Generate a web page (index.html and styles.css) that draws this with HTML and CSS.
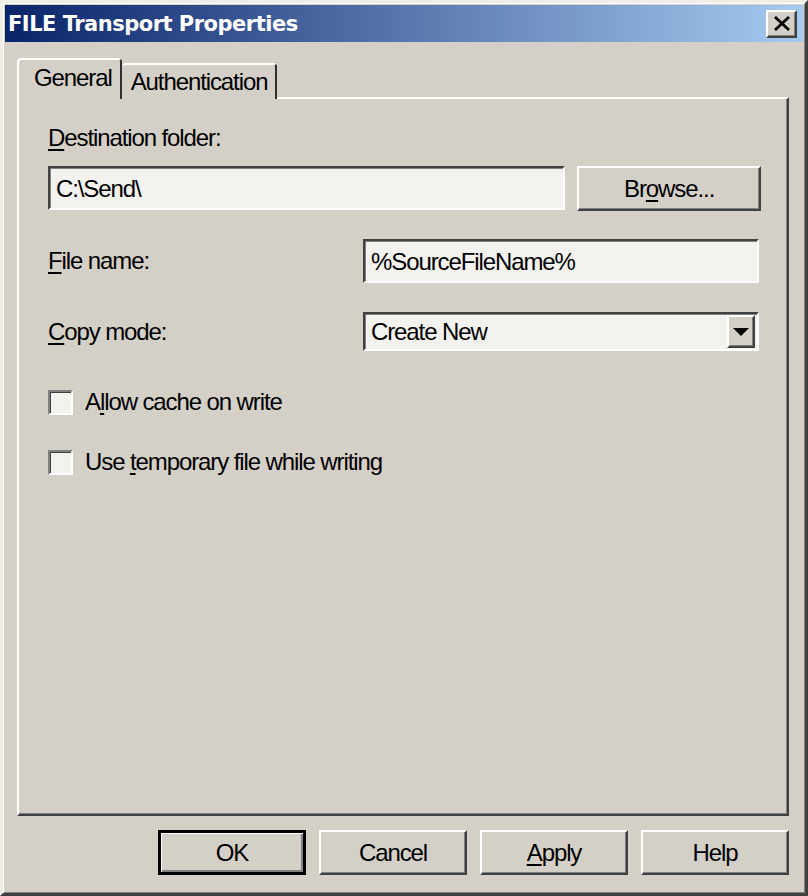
FILE: index.html
```html
<!DOCTYPE html>
<html lang="en">
<head>
  <meta charset="UTF-8" />
  <title>FILE Transport Properties</title>
  <link rel="stylesheet" href="styles.css">
</head>
<body>

<div class="dialog">
  <div class="titlebar">
    <span class="title">FILE Transport Properties</span>
    <button class="close" aria-label="Close">
      <svg width="18" height="15" viewBox="0 0 18 15">
        <path d="M2 1 L16 14 M16 1 L2 14" stroke="#000" stroke-width="2.8" />
      </svg>
    </button>
  </div>

  <div class="content">
    <!-- Tabs -->
    <div class="tabs">
      <div class="tab active">General</div>
      <div class="tab">Authentication</div>
    </div>

    <!-- General page -->
    <div class="panel">
      <div class="label"><u>D</u>estination folder:</div>
      <div class="dest-row">
        <div class="field">C:\Send\</div>
        <button class="btn browse">Br<u>o</u>wse...</button>
      </div>

      <div class="form-row">
        <div class="label"><u>F</u>ile name:</div>
        <div class="field">%SourceFileName%</div>
      </div>

      <div class="form-row">
        <div class="label"><u>C</u>opy mode:</div>
        <div class="field combo">
          <span>Create New</span>
          <span class="drop"><span class="arrow"></span></span>
        </div>
      </div>

      <label class="check"><span class="box"></span><span>A<u>l</u>low cache on write</span></label>
      <label class="check"><span class="box"></span><span>Use <u>t</u>emporary file while writing</span></label>
    </div>

    <div class="actions">
      <button class="btn default">OK</button>
      <button class="btn">Cancel</button>
      <button class="btn"><u>A</u>pply</button>
      <button class="btn">Help</button>
    </div>
  </div>
</div>

</body>
</html>
```

FILE: styles.css
```css
body {
  margin: 0;
  background: #d4d0c8;
  font-family: 'Liberation Sans', Arial, sans-serif;
  font-size: 24px;
  letter-spacing: -1.1px;
  color: #000;
}

u {
  text-decoration-thickness: 2px;
  text-underline-offset: 3px;
}

.dialog {
  width: 808px;
  height: 896px;
  box-sizing: border-box;
  padding: 2px;
  background: #d4d0c8;
  border: 3px solid;
  border-color: #efede8 #404040 #404040 #efede8;
  box-shadow: inset 1px 1px #fff, inset -1px -1px #808080;
}

/* title bar */
.titlebar {
  height: 37px;
  display: flex;
  align-items: center;
  justify-content: space-between;
  padding: 0 6px 0 3px;
  background: linear-gradient(to right, #0a246a, #a6caf0);
}

.title {
  color: #fff;
  font-family: 'DejaVu Sans', sans-serif;
  font-weight: bold;
  font-size: 21px;
  letter-spacing: -0.5px;
}

.close {
  width: 31px;
  height: 28px;
  padding: 0;
  display: flex;
  align-items: center;
  justify-content: center;
  background: #d4d0c8;
  border: 2px solid;
  border-color: #fff #404040 #404040 #fff;
  box-shadow: inset -1px -1px #808080;
}

.content {
  padding: 16px 14px 0 12px;
}

/* tabs */
.tabs {
  display: flex;
  align-items: flex-end;
  height: 41px;
  position: relative;
  z-index: 1;
  margin-bottom: -2px;
}

.tab {
  box-sizing: border-box;
  height: 36px;
  padding: 0 8px 0 9px;
  border: 2px solid;
  border-bottom: none;
  border-color: #fff #303030 transparent #fff;
  border-radius: 4px 4px 0 0;
  line-height: 34px;
  background: #d4d0c8;
}

.tab.active {
  height: 41px;
  padding: 0 8px 0 15px;
  line-height: 36px;
}

.tab + .tab {
  border-left: none;
}

/* page */
.panel {
  box-sizing: border-box;
  height: 719px;
  padding: 24px 26px 0 29px;
  border: 2px solid;
  border-color: #fff #404040 #404040 #fff;
  box-shadow: inset -1px -1px #808080;
}

.label {
  line-height: 30px;
}

.dest-row {
  display: flex;
  gap: 12px;
  margin-top: 13px;
}

.dest-row .field {
  width: 518px;
}

.field {
  box-sizing: border-box;
  height: 44px;
  padding: 5px 6px 0;
  background: #f3f2ef;
  border: 2px solid;
  border-color: #404040 #fff #fff #404040;
  box-shadow: inset 1px 1px #808080;
  line-height: 32px;
}

.form-row {
  display: grid;
  grid-template-columns: 315px 1fr;
  align-items: center;
  margin-right: 2px;
}

.dest-row + .form-row {
  margin-top: 28px;
}

.form-row + .form-row {
  margin-top: 29px;
}

.combo {
  height: 39px;
  display: flex;
  justify-content: space-between;
  align-items: center;
  padding: 0 2px 0 6px;
  line-height: normal;
}

.drop {
  width: 28px;
  height: 33px;
  box-sizing: border-box;
  display: flex;
  align-items: center;
  justify-content: center;
  background: #d4d0c8;
  border: 2px solid;
  border-color: #fff #404040 #404040 #fff;
  box-shadow: inset -1px -1px #808080;
}

.arrow {
  width: 0;
  height: 0;
  border-left: 8px solid transparent;
  border-right: 8px solid transparent;
  border-top: 8px solid #000;
}

/* checkboxes */
.check {
  display: flex;
  align-items: center;
  gap: 12px;
}

.form-row + .check {
  margin-top: 37px;
}

.check + .check {
  margin-top: 32px;
}

.box {
  width: 25px;
  height: 25px;
  box-sizing: border-box;
  background: #f3f2ef;
  border: 2px solid;
  border-color: #808080 #fff #fff #808080;
  box-shadow: inset 1px 1px #404040;
}

/* buttons */
.btn {
  box-sizing: border-box;
  width: 148px;
  height: 45px;
  padding: 0;
  font: inherit;
  letter-spacing: inherit;
  color: #000;
  background: #d4d0c8;
  border: 2px solid;
  border-color: #fff #404040 #404040 #fff;
  box-shadow: inset -1px -1px #808080;
}

.browse {
  width: 184px;
}

.btn.default {
  border: 3px solid #000;
  box-shadow: inset 1px 1px #fff, inset -2px -2px #808080;
}

.actions {
  display: flex;
  justify-content: flex-end;
  gap: 13px;
  margin-top: 14px;
}
```
